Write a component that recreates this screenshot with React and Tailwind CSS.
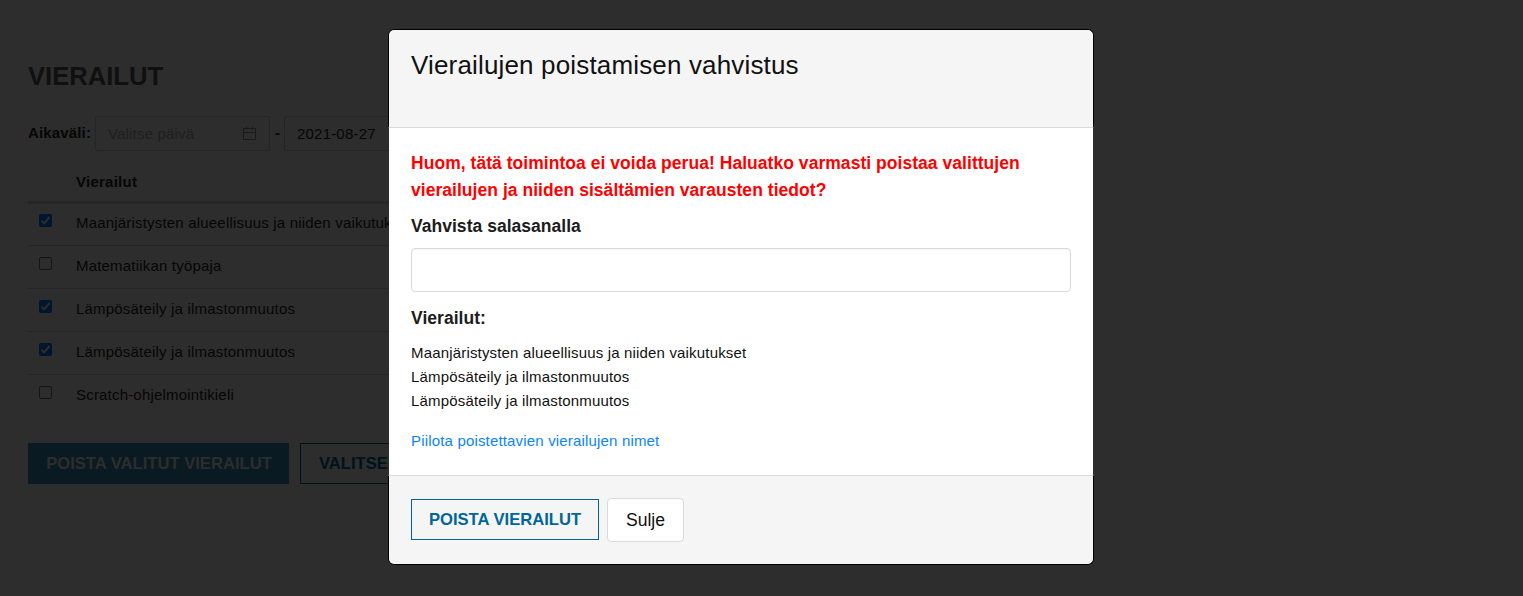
const visits = [
  { name: "Maanjäristysten alueellisuus ja niiden vaikutukset", selected: true },
  { name: "Matematiikan työpaja", selected: false },
  { name: "Lämpösäteily ja ilmastonmuutos", selected: true },
  { name: "Lämpösäteily ja ilmastonmuutos", selected: true },
  { name: "Scratch-ohjelmointikieli", selected: false },
];

function CalendarIcon() {
  return (
    <svg className="h-[15px] w-[14px]" viewBox="0 0 14 15" fill="none" stroke="#1a1a1a">
      <path d="M.5 2.5h12v11H.5zM.5 6.5h12M3.5 .5v3M9.500 .5v3" />
    </svg>
  );
}

function DateField({ value, placeholder }) {
  return (
    <div className="flex h-[35px] w-[175px] shrink-0 items-center justify-between rounded-[2px] border border-[#252525] pl-3 pr-3">
      <span className={value ? "pt-px tracking-[0.2px] text-[#060606]" : "pt-px tracking-[0.18px] text-[#1f1f1f]"}>
        {value || placeholder}
      </span>
      <CalendarIcon />
    </div>
  );
}

function Checkbox({ checked }) {
  if (!checked) {
    return <span className="block h-[13px] w-[13px] rounded-[2px] border border-[#151515]" />;
  }
  return (
    <span className="block h-[13px] w-[13px] rounded-[2px] bg-[#00152e]">
      <svg className="h-[13px] w-[13px]" viewBox="0 0 13 13" fill="none" stroke="#2d2d2d" strokeWidth="2">
        <path d="M2.500 6.800 5.200 9.400 10.500 3" />
      </svg>
    </span>
  );
}

function VisitsPage() {
  return (
    <div className="w-[1040px] pl-7 pt-[60px] text-[15px] text-[#060606]">
      <h1 className="h-8 text-[25.600px] font-bold leading-8 text-[#101010]">VIERAILUT</h1>
      <div className="mt-6 flex h-[35px] items-center">
        <span className="w-[67px] font-bold tracking-[0.15px]">Aikaväli:</span>
        <DateField placeholder="Valitse päivä" />
        <span className="w-[14px] pl-[5px] font-bold">-</span>
        <DateField value="2021-08-27" />
      </div>
      <div className="-mb-px mt-[10px] h-[43px] border-b-3 border-[#262626] pl-12 pt-[9px] font-bold leading-6 tracking-[0.25px]">
        Vierailut
      </div>
      {visits.map((visit, i) => (
        <div
          key={i}
          className={
            i === visits.length - 1
              ? "flex h-[43px] items-start pl-[11px]"
              : "flex h-[43px] items-start border-b border-[#252525] pl-[11px]"
          }
        >
          <div className="w-[37px] pt-[11px]"><Checkbox checked={visit.selected} /></div>
          <div className="pt-2 leading-6 tracking-[0.19px]">{visit.name}</div>
        </div>
      ))}
      <div className="mt-[25px] flex gap-[11px] text-[16.600px] font-bold">
        <div className="flex h-[41px] w-[261px] items-center justify-center bg-[#0a1a22] pl-px pt-[2px] text-[#2d2d2d]">POISTA VALITUT VIERAILUT</div>
        <div className="flex h-[41px] w-[180px] items-center border border-[#00121c] pl-[18px] pt-[2px] text-[#00121c]">VALITSE KAIKKI</div>
      </div>
    </div>
  );
}

function ConfirmDialog() {
  return (
    <div className="absolute left-[388px] top-[29px] w-[706px] text-[#111111]">
      <header className="h-[99px] rounded-t-[6px] border border-black border-b-[#dadada] bg-[#f5f5f5] pl-[22px] pt-[19px] text-[26px] leading-8 tracking-[0.16px]">
        Vierailujen poistamisen vahvistus
      </header>
      <main className="mx-px h-[347px] bg-white px-[22px] pt-[22px] text-[15px]">
        <p className="text-[17.500px] font-bold leading-[27px] tracking-[0.04px] text-[#ff0000]">
          Huom, tätä toimintoa ei voida perua! Haluatko varmasti poistaa valittujen<br />
          vierailujen ja niiden sisältämien varausten tiedot?
        </p>
        <h2 className="mt-[9px] text-[17.500px] font-bold leading-[27px] tracking-[0.03px] text-[#1c1c1c]">Vahvista salasanalla</h2>
        <div className="mt-2 h-[44px] rounded-[4px] border border-[#dadada] shadow-[inset_0_1px_2px_rgba(0,0,0,0.04)]" />
        <h2 className="mt-[13px] text-[17.500px] font-bold leading-[27px] tracking-[0.03px] text-[#1c1c1c]">Vierailut:</h2>
        <ul className="mt-[9px] leading-6 tracking-[0.17px]">
          {visits.filter((visit) => visit.selected).map((visit, i) => <li key={i}>{visit.name}</li>)}
        </ul>
        <div className="mt-4 leading-6 tracking-[0.17px] text-[#0a84ff]">Piilota poistettavien vierailujen nimet</div>
      </main>
      <footer className="flex h-[90px] items-start gap-2 rounded-b-[6px] border border-black border-t-[#dadada] bg-[#f5f5f5] pl-[22px] pt-[22px]">
        <button className="mt-px h-[41px] w-[188px] border border-[#00629b] pt-[2px] text-[16.600px] font-bold text-[#006699]">POISTA VIERAILUT</button>
        <button className="h-[44px] w-[77px] rounded-[4px] border border-[#dadada] bg-white text-[17.600px]">Sulje</button>
      </footer>
    </div>
  );
}

export default function App() {
  return (
    <div className="relative h-[596px] w-full overflow-hidden bg-[#2d2d2d] font-['Liberation_Sans',Arial,sans-serif]">
      <VisitsPage />
      <ConfirmDialog />
    </div>
  );
}
